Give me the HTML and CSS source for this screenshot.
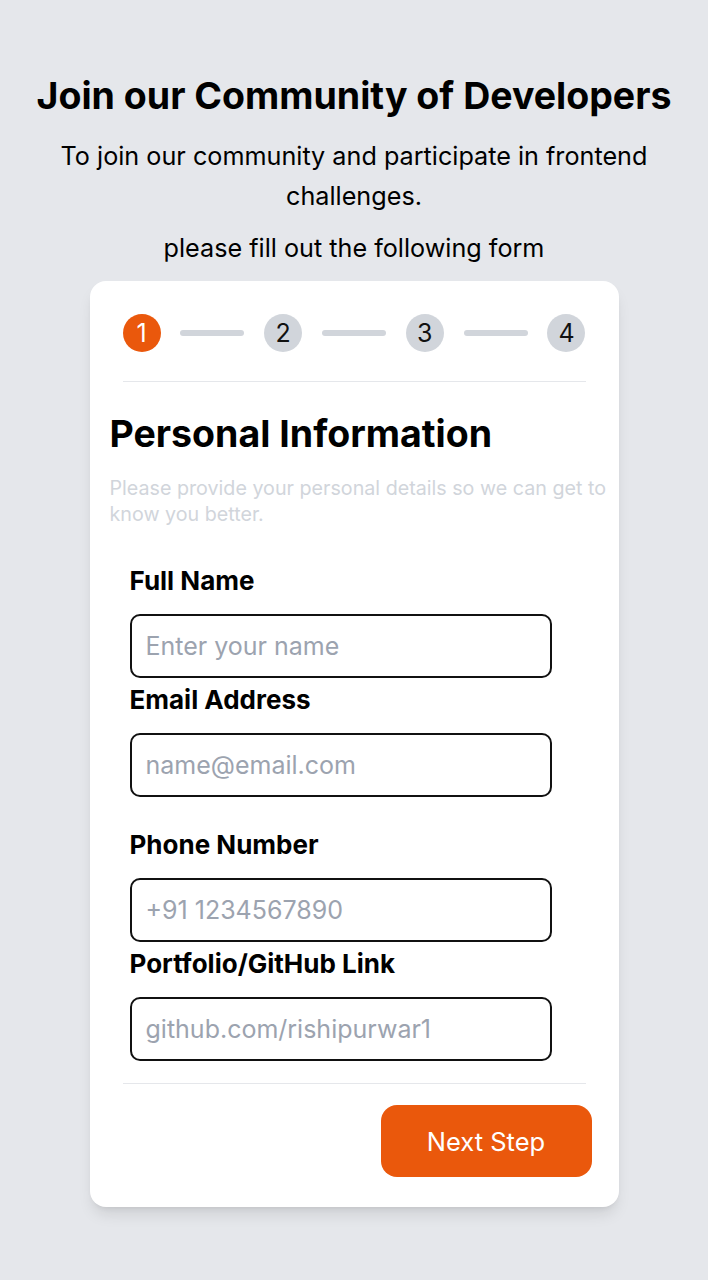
FILE: index.html
```html
<!DOCTYPE html>
<html lang="en">
<head>
<meta charset="utf-8">
<title>Join our Community</title>
<link rel="stylesheet" href="styles.css">
</head>
<body>
<main class="page">
  <h1 class="title">Join our Community of Developers</h1>
  <p class="subtitle">To join our community and participate in frontend challenges.</p>
  <p class="subtitle2">please fill out the following form</p>

  <section class="card">
    <div class="stepper">
      <span class="step active">1</span>
      <span class="bar"></span>
      <span class="step">2</span>
      <span class="bar"></span>
      <span class="step">3</span>
      <span class="bar"></span>
      <span class="step">4</span>
    </div>
    <hr class="divider top">
    <h2 class="heading">Personal Information</h2>
    <p class="desc">Please provide your personal details so we can get to know you better.</p>

    <form class="form">
      <div class="pair">
        <label class="label" for="name">Full Name</label>
        <input class="input" id="name" type="text" placeholder="Enter your name">
        <label class="label second" for="email">Email Address</label>
        <input class="input" id="email" type="email" placeholder="name@email.com">
      </div>
      <div class="pair">
        <label class="label" for="phone">Phone Number</label>
        <input class="input" id="phone" type="tel" placeholder="+91 1234567890">
        <label class="label second" for="link">Portfolio/GitHub Link</label>
        <input class="input" id="link" type="text" placeholder="github.com/rishipurwar1">
      </div>
    </form>
    <hr class="divider bottom">
    <div class="actions">
      <button class="next" type="button">Next Step</button>
    </div>
  </section>
</main>
</body>
</html>
```

FILE: styles.css
```css
* { box-sizing: border-box; }
html, body { margin: 0; padding: 0; }
body {
  background: #e5e7eb;
  font-family: Inter, "Noto Sans", "Liberation Sans", sans-serif;
  color: #000;
}
.page {
  display: flex;
  flex-direction: column;
  align-items: center;
  padding-top: 74px;
  padding-bottom: 74px;
}
.title {
  margin: 0;
  font-size: 37.5px;
  line-height: 44px;
  font-weight: 700;
  text-align: center;
  white-space: nowrap;
}
.subtitle {
  margin: 18px 0 0;
  width: 620px;
  font-size: 25.2px;
  line-height: 40px;
  font-weight: 400;
  text-align: center;
}
.subtitle2 {
  margin: 12px 0 0;
  font-size: 25.2px;
  line-height: 40px;
  text-align: center;
}
.card {
  margin-top: 13px;
  width: 529px;
  background: #fff;
  border-radius: 16px;
  box-shadow: 0 10px 15px -3px rgba(0,0,0,0.10), 0 4px 6px -4px rgba(0,0,0,0.10);
  padding: 33px 20px 30px 20px;
  display: flex;
  flex-direction: column;
}
.stepper {
  display: flex;
  align-items: center;
  justify-content: space-between;
  margin: 0 13px;
}
.step {
  width: 38px;
  height: 38px;
  border-radius: 50%;
  background: #d1d5db;
  display: flex;
  align-items: center;
  justify-content: center;
  font-size: 25px;
  color: #111;
}
.step.active {
  background: #ea580c;
  color: #fff;
}
.bar {
  width: 64px;
  height: 6px;
  border-radius: 3px;
  background: #d1d5db;
}
.divider {
  border: 0;
  border-top: 1.5px solid #e5e7eb;
  margin: 0 13px;
}
.divider.top { margin-top: 29px; }
.heading {
  margin: 30px 0 0;
  font-size: 37.5px;
  line-height: 44px;
  font-weight: 700;
}
.desc {
  margin: 19px -14px 0 0;
  font-size: 19.7px;
  line-height: 26px;
  color: #d1d5db;
}
.form {
  margin-top: 40px;
  padding-left: 20px;
  display: flex;
  flex-direction: column;
  gap: 34px;
}
.pair {
  display: flex;
  flex-direction: column;
}
.label {
  font-size: 26px;
  line-height: 28px;
  font-weight: 650;
  margin-bottom: 19px;
}
.label.second { margin-top: 8px; }
.input {
  width: 422px;
  height: 64px;
  border: 2px solid #111;
  border-radius: 10px;
  padding: 0 14px;
  font-family: inherit;
  font-size: 25px;
  color: #111;
  background: #fff;
  outline: none;
}
.input::placeholder { color: #9ca3af; }
.divider.bottom { margin-top: 22px; }
.actions {
  display: flex;
  justify-content: flex-end;
  margin-top: 21px;
  margin-right: 7px;
}
.next {
  width: 211px;
  height: 72px;
  border: 0;
  border-radius: 16px;
  background: #ea580c;
  color: #fff;
  font-family: inherit;
  font-size: 25.5px;
  font-weight: 400;
  cursor: pointer;
}
```
